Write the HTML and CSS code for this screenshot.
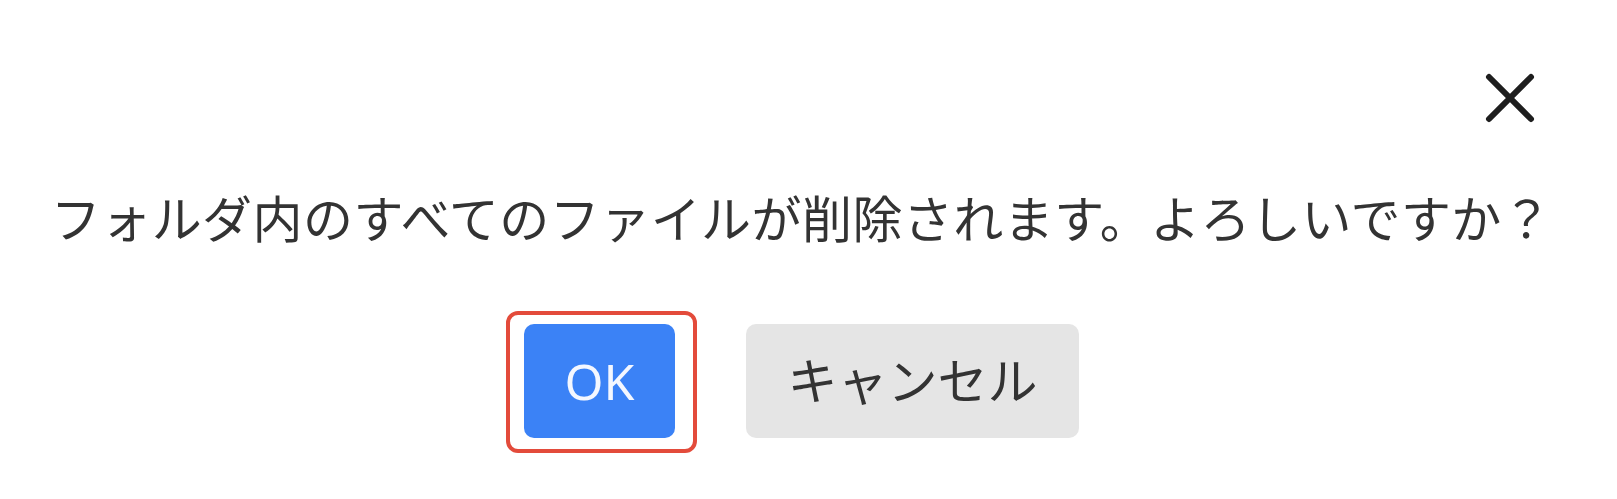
FILE: index.html
```html
<!DOCTYPE html>
<html lang="ja">
<head>
  <meta charset="UTF-8" />
  <meta name="viewport" content="width=device-width, initial-scale=1.0"/>
  <title>確認</title>
  <link rel="stylesheet" href="styles.css">
</head>
<body>
  <!-- 確認ダイアログ -->
  <div class="dialog">
    <div class="dialog-header">
      <button class="close-btn" aria-label="閉じる">
        <svg viewBox="0 0 50 50" width="50" height="50">
          <path d="M4 4 L46 46 M46 4 L4 46" />
        </svg>
      </button>
    </div>

    <p class="message">フォルダ内のすべてのファイルが削除されます。よろしいですか？</p>

    <div class="actions">
      <div class="focus-ring">
        <button class="btn btn-ok">OK</button>
      </div>
      <button class="btn btn-cancel">キャンセル</button>
    </div>
  </div>
</body>
</html>
```

FILE: styles.css
```css
body {
  margin: 0;
  padding: 0;
  background: #fff;
  font-family: "Noto Sans CJK JP", "Noto Sans", sans-serif;
  color: #333;
}
.dialog {
  display: flex;
  flex-direction: column;
}
.dialog-header {
  display: flex;
  justify-content: flex-end;
  padding: 73px 82px 0 0;
}
.close-btn {
  width: 50px;
  height: 50px;
  padding: 0;
  border: none;
  background: none;
  cursor: pointer;
  display: flex;
}
.close-btn svg path {
  stroke: #1e1e1e;
  stroke-width: 6;
  stroke-linecap: round;
  fill: none;
}
.message {
  margin: 56px 0 0;
  padding-right: 14px;
  text-align: center;
  font-size: 50px;
  line-height: 75px;
  letter-spacing: 0.45px;
  color: #333;
}
.actions {
  display: flex;
  justify-content: center;
  align-items: flex-start;
  gap: 49px;
  margin-top: 70px;
  padding-right: 32px;
}
.focus-ring {
  border: 4px solid #e34b3b;
  border-radius: 12px;
  padding: 9px 18px 11px 14px;
  margin-top: -13px;
}
.btn {
  border: none;
  border-radius: 10px;
  font-family: "Noto Sans", "Noto Sans CJK JP", sans-serif;
  font-size: 50px;
  line-height: 72px;
  height: 114px;
  padding: 0;
  cursor: pointer;
}
.btn-ok {
  width: 151px;
  background: #3b82f6;
  color: #f4f7ff;
}
.btn-cancel {
  width: 333px;
  background: #e5e5e5;
  color: #333;
}
```
